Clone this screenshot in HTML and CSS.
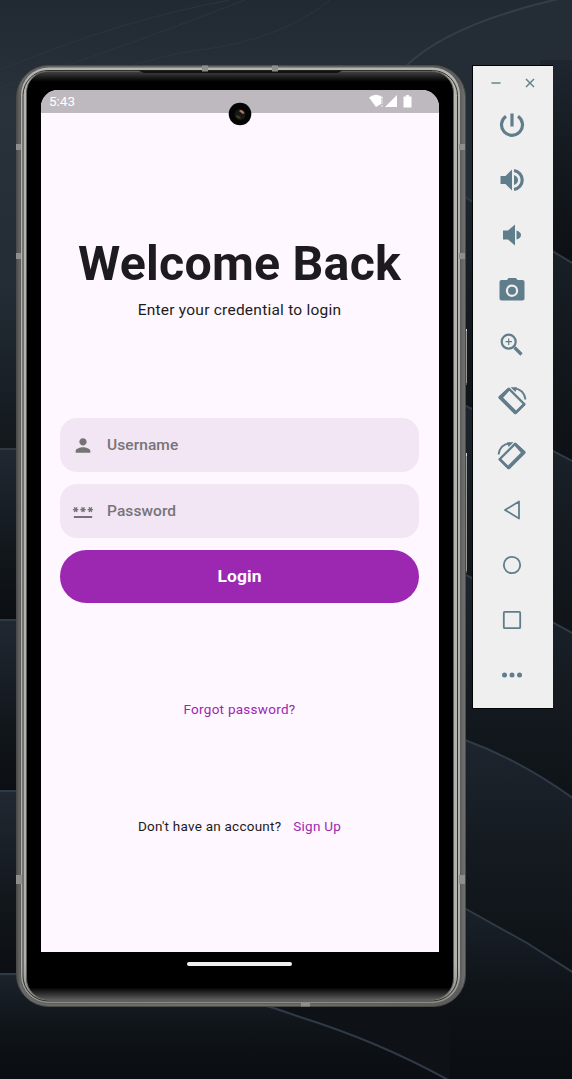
FILE: index.html
```html
<!DOCTYPE html>
<html lang="en">
<head>
<meta charset="utf-8">
<title>Login</title>
<link rel="stylesheet" href="styles.css">
</head>
<body>
<svg class="wallpaper" viewBox="0 0 572 1079" aria-hidden="true">
  <defs>
    <linearGradient id="sky" x1="0" y1="0" x2="0" y2="1"><stop offset="0" stop-color="#212932"/><stop offset=".1" stop-color="#29313a"/><stop offset=".27" stop-color="#232c35"/><stop offset=".37" stop-color="#171e24"/><stop offset=".42" stop-color="#12171b"/><stop offset="1" stop-color="#0e1216"/></linearGradient>
    <linearGradient id="wave" x1="0" y1="0" x2="0" y2="1"><stop offset="0" stop-color="#1f2630"/><stop offset=".4" stop-color="#151b21"/><stop offset="1" stop-color="#0c1014"/></linearGradient>
    <linearGradient id="left" x1="0" y1="0" x2="0" y2="1"><stop offset="0" stop-color="#202832"/><stop offset=".6" stop-color="#12171c"/><stop offset="1" stop-color="#0b0f13"/></linearGradient>
    <linearGradient id="low" x1="0" y1="0" x2="0" y2="1"><stop offset="0" stop-color="#1c232c"/><stop offset=".5" stop-color="#0f1419"/><stop offset="1" stop-color="#0a0d12"/></linearGradient>
  </defs>
  <rect width="572" height="1079" fill="url(#sky)"/>
  <path d="M0 70Q120 20 230 0M0 88Q130 45 245 0M0 121Q120 60 200 50T330 0" fill="none" stroke="#2c353f" stroke-width="1"/>
  <path d="M405 67Q450 22 572-4V300H405Z" fill="#242c36"/>
  <path d="M405 67Q450 22 572-4" fill="none" stroke="#343e49" stroke-width="2"/>
  <path d="M540 60H572V264H540Z" fill="url(#wave)"/>
  <g fill="url(#wave)" stroke="#303a46" stroke-width="2">
    <path d="M440 181Q500 220 574 264V480H440Z"/>
    <path d="M440 391L470 408L574 462V700H440Z"/>
    <path d="M440 563L470 577L574 634V850H440Z"/>
    <path d="M440 729L465 740Q520 760 574 799V1000H440Z"/>
  </g>
  <g fill="url(#left)" stroke="#303a46" stroke-width="2">
    <path d="M-2 449H40V620H-2Z"/>
    <path d="M-2 620H40V791H-2Z"/>
    <path d="M-2 791H40V974H-2Z"/>
  </g>
  <path d="M440 894L466 909L527 943L574 973V1081H440Z" fill="url(#low)"/>
  <path d="M440 894L466 909L527 943L574 973" fill="none" stroke="#303a46" stroke-width="2"/>
  <path d="M-2 974H300L450 1081H-2Z" fill="url(#low)"/>
  <path d="M270 1000H450V1081H270Z" fill="#0e1216"/>
  <path d="M-2 974H20Q170 970 300 1017Q380 1042 450 1081H-2Z" fill="url(#low)" stroke="#303a46" stroke-width="2"/>
</svg>

<main class="stage">
  <section class="phone">
    <svg class="frame" viewBox="0 0 452 942" aria-hidden="true">
      <defs>
        <linearGradient id="rimx" x1="0" y1="0" x2="450" y2="0" gradientUnits="userSpaceOnUse"><stop offset="0" stop-color="#484846"/><stop offset=".01" stop-color="#696967"/><stop offset=".5" stop-color="#70706e"/><stop offset=".985" stop-color="#5c5c5a"/><stop offset="1" stop-color="#747472"/></linearGradient>
        <linearGradient id="shine" x1="0" y1="0" x2="0" y2="1"><stop offset="0" stop-color="#b4b4b1"/><stop offset=".96" stop-color="#b0b0ad"/><stop offset="1" stop-color="#8c8c89"/></linearGradient>
        <linearGradient id="fade" x1="0" y1="0" x2="0" y2="1"><stop offset="0" stop-color="#424242"/><stop offset=".011" stop-color="#000"/><stop offset=".987" stop-color="#000"/><stop offset="1" stop-color="#5a5a5a"/></linearGradient>
      </defs>
      <rect x="448" y="264" width="3" height="56" fill="#969694"/><rect x="448" y="264" width="3" height="2" fill="#d0d0ce"/><rect x="448" y="318" width="3" height="2" fill="#555"/>
      <rect x="448" y="388" width="3" height="120" fill="#969694"/><rect x="448" y="388" width="3" height="3" fill="#d0d0ce"/><rect x="448" y="506" width="3" height="2" fill="#555"/>
      <rect x=".5" y=".5" width="449" height="941" rx="32" fill="url(#rimx)" stroke="#4a4a48"/>
      <rect x="4.500" y="2" width="440" height="936.500" rx="28" fill="url(#shine)" stroke="#5c5c5a"/>
      <rect x="7" y="5.500" width="434.500" height="930.500" rx="25" fill="url(#shine)" stroke="#30302f"/>
      <rect x="10.500" y="6.500" width="427" height="928" rx="21" fill="url(#fade)" stroke="#5c5c5a"/>
      <path d="M122 5.500H327L321 8H128Z" fill="#111"/>
      <g fill="#8e8e8c"><rect x="186" y=".5" width="6" height="6"/><rect x="256" y=".5" width="6" height="6"/><rect x="285" y="937.500" width="9" height="4"/><rect y="79" width="5" height="6"/><rect y="188" width="5" height="6"/><rect y="810" width="6" height="9"/><rect x="443" y="79" width="6" height="6"/><rect x="443" y="188" width="6" height="6"/><rect x="443" y="810" width="6" height="9"/></g>
    </svg>
    <div class="screen">
      <header class="status">
        <span>5:43</span>
        <svg class="status-icons" viewBox="0 0 44 14" aria-hidden="true">
          <path d="M0 3.500Q7-2 14 3.500L12 6V10L7 13Z" fill="#fff"/><path d="M12 4h2v6h-2zM12 11h2v2h-2z" fill="#d8d3d9"/><path d="M16 13L28 1V13Z" fill="#fff"/><path d="M34.500 2.500H37V1H40V2.500H42.500V13.500H34.500Z" fill="#fff"/>
        </svg>
        <svg class="camera" viewBox="0 0 24 24" aria-hidden="true"><circle cx="12" cy="12" r="11.300" fill="#050505"/><circle cx="12" cy="12.500" r="5.500" fill="#171717"/><path d="M11 9Q14 6.500 16.500 11L15 12Z" fill="#b87858"/><path d="M8 13Q11 13 13 16Q9 18 8 13" fill="#3e4216"/></svg>
      </header>
      <div class="content">
        <h1 class="title">Welcome Back</h1>
        <p class="subtitle">Enter your credential to login</p>
        <form class="form">
          <div class="field">
            <svg class="field-icon" viewBox="0 0 24 24"><path d="M12 12c2.210 0 4-1.790 4-4s-1.790-4-4-4-4 1.790-4 4 1.790 4 4 4zm0 2c-2.670 0-8 1.340-8 4v2h16v-2c0-2.660-5.330-4-8-4z"/></svg>
            <span>Username</span>
          </div>
          <div class="field">
            <svg class="field-icon" viewBox="0 0 24 24"><path d="M2 17h20v2H2v-2zm1.150-4.050L4 11.470l.85 1.480 1.300-.75-.85-1.480H7v-1.500H5.300l.85-1.470L4.850 7 4 8.470 3.150 7l-1.300.75.85 1.470H1v1.500h1.700l-.85 1.480 1.300.75zm6.700-.75l1.300.75.850-1.480.85 1.480 1.300-.75-.85-1.480H15v-1.500h-1.700l.85-1.470-1.300-.75L12 8.470 11.150 7l-1.300.75.85 1.470H9v1.500h1.700l-.85 1.480zM23 9.220h-1.700l.85-1.470-1.300-.75L20 8.470 19.150 7l-1.300.75.85 1.470H17v1.500h1.700l-.85 1.480 1.300.75.85-1.480.85 1.480 1.300-.75-.85-1.480H23v-1.500z"/></svg>
            <span>Password</span>
          </div>
          <button class="login" type="button">Login</button>
        </form>
        <a class="forgot">Forgot password?</a>
        <p class="signup"><span>Don't have an account?</span><a class="link">Sign Up</a></p>
      </div>
    </div>
    <div class="home-bar"></div>
  </section>

  <aside class="toolbar">
    <div class="window-controls">
      <svg viewBox="0 0 10 10"><path d="M.5 5H9.500"/></svg>
      <svg viewBox="0 0 10 10"><path d="M1 1L9 9M9 1L1 9"/></svg>
    </div>
    <svg class="tool" viewBox="0 0 32 32"><path class="line thick" d="M16 4.500V17.500M10 7.200A10.500 10.500 0 1 0 22 7.200"/></svg>
    <svg class="tool" viewBox="0 0 32 32"><path d="M4.500 12H9.500L16 5.500V26.500L9.500 20H4.500ZM18 11Q22 12.500 22 16T18 21Z"/><path class="line thick" d="M18 6.500A9.600 9.600 0 0 1 18 25.500"/></svg>
    <svg class="tool" viewBox="0 0 32 32"><path d="M7 11.500H12L19 5.500V26.500L12 20.500H7ZM20.500 11.500Q25 13 25 16T20.500 20.500Z"/></svg>
    <svg class="tool" viewBox="0 0 32 32"><path fill-rule="evenodd" d="M11 6L12.500 4H20L21.500 6H26.500Q28.500 6 28.500 8V24.500Q28.500 26.500 26.500 26.500H5.500Q3.500 26.500 3.500 24.500V8Q3.500 6 5.500 6ZM16 10.500A6.200 6.200 0 1 0 16 22.900A6.200 6.200 0 1 0 16 10.500ZM16 12.700A4 4 0 1 1 16 20.700A4 4 0 1 1 16 12.700"/></svg>
    <svg class="tool" viewBox="0 0 32 32"><circle class="line mid" cx="12.700" cy="12.700" r="7"/><path class="line thin" d="M12.700 9.500V15.900M9.500 12.700H15.900"/><path class="line thick" d="M18.500 18.500L25.500 25.500"/></svg>
    <svg class="tool" viewBox="0 0 32 32"><g id="rotate"><path fill-rule="evenodd" d="M12.200 3.800Q13 3.300 13.800 4L29.300 19.500Q30 20.200 29.300 21L20.600 29.700Q19.300 30.800 18 29.700L2.700 14.500Q1.900 13.500 2.700 12.600ZM13 6.500L6.500 13L20.300 26.800L26.800 20.300Z"/><path d="M2.700 12.600L12 4L14 6L6 15ZM19 27.500L27.500 19L29.300 21L20 30Z"/><path class="line" d="M18 4.300Q28 5 29.500 15.500"/><path d="M14.500 3.200L21 3.200L19.500 8Z"/></g></svg>
    <svg class="tool flipped" viewBox="0 0 32 32"><use href="#rotate"/></svg>
    <svg class="tool" viewBox="0 0 32 32"><path class="line round" d="M23 7.500V24.500L9 16Z"/></svg>
    <svg class="tool" viewBox="0 0 32 32"><circle class="line" cx="16" cy="16" r="8.200"/></svg>
    <svg class="tool" viewBox="0 0 32 32"><rect class="line" x="7.800" y="7.800" width="16.400" height="16.400" rx="1"/></svg>
    <svg class="tool" viewBox="0 0 32 32"><circle cx="8.500" cy="16" r="2.500"/><circle cx="16" cy="16" r="2.500"/><circle cx="23.500" cy="16" r="2.500"/></svg>
  </aside>
</main>
</body>
</html>
```
FILE: styles.css
```css
* { box-sizing: border-box; }
body { margin: 0; height: 1079px; overflow: hidden; position: relative; background: #12171c; font-family: Roboto, sans-serif; color: #1d1b20; }
.wallpaper { position: absolute; inset: 0; width: 572px; height: 1079px; }
.stage { position: relative; display: flex; align-items: flex-start; padding: 65px 0 0 16px; }
.phone { position: relative; width: 450px; height: 942px; padding: 25px 27px 0 25px; margin-right: 6px; flex: none; }
.frame { position: absolute; left: 0; top: 0; width: 452px; height: 942px; }
.screen { position: relative; height: 862px; background: #fef7ff; border-radius: 17px 17px 0 0; }
.status { position: relative; display: flex; justify-content: space-between; height: 23px; padding: 3px 26px 0 8px; background: #beb9bf; border-radius: 17px 17px 0 0; color: #fff; font-size: 13.500px; line-height: 17px; }
.status-icons { width: 44px; height: 14px; margin-top: 1px; }
.camera { position: absolute; left: 187px; top: 12px; width: 24px; height: 24px; }
.content { display: flex; flex-direction: column; align-items: center; padding: 122px 20px 0 19px; }
.title { margin: 0; font-size: 48.300px; line-height: 57px; letter-spacing: .24px; font-weight: 700; white-space: nowrap; }
.subtitle { margin: 8px 0 0; font-size: 15.500px; line-height: 20px; letter-spacing: .24px; }
.form { display: flex; flex-direction: column; align-self: stretch; gap: 12px; margin-top: 98px; }
.field { display: flex; align-items: center; gap: 13px; height: 54px; padding-left: 12px; border-radius: 17px; background: #f2e5f4; color: #777478; font-size: 15.500px; font-weight: 500; letter-spacing: .08px; }
.field-icon { width: 22px; height: 23px; fill: #747474; }
.login { height: 53px; padding: 0 0 1px; border: 0; border-radius: 27px; background: #9c27b0; color: #fff; font: 700 17.400px/24px Roboto, sans-serif; letter-spacing: .1px; }
.forgot { margin-top: 97px; font-size: 13.500px; line-height: 18px; letter-spacing: .27px; color: #9c27b0; }
.signup { display: flex; gap: 12px; margin: 99px 0 0; font-size: 13.500px; line-height: 18px; letter-spacing: .24px; }
.link { color: #9c27b0; }
.home-bar { position: relative; width: 105px; height: 4px; margin: 10px 0 0 146px; border-radius: 2px; background: #f0f0f0; }
.toolbar { display: flex; flex-direction: column; align-items: center; gap: 23px; width: 81px; height: 644px; padding-right: 3px; border: 1px solid #030405; border-right: 0; background: #efefef; flex: none; }
.window-controls { display: flex; gap: 24px; height: 20px; padding-top: 12px; margin-left: 2px; }
.window-controls svg { width: 10px; height: 10px; fill: none; stroke: #607d8b; stroke-width: 1.400; }
.tool { width: 32px; height: 32px; fill: #607d8b; flex: none; }
.flipped { transform: scaleX(-1); }
.line { fill: none; stroke: #607d8b; stroke-width: 1.800; }
.thin { stroke-width: 1.200; }
.mid { stroke-width: 2.200; }
.thick { stroke-width: 3.200; }
.round { stroke-linejoin: round; }
```
